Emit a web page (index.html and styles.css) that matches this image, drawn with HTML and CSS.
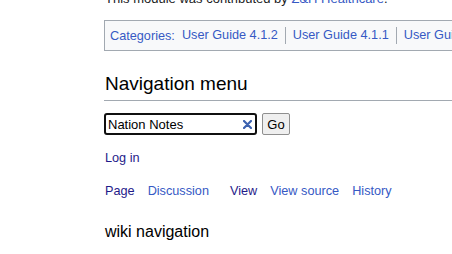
FILE: index.html
```html
<!DOCTYPE html>
<html lang="en">
<head>
    <meta charset="UTF-8">
    <title>Navigation menu</title>
    <link rel="stylesheet" href="styles.css">
</head>
<body>
    <div class="content">
        <p class="credit">This module was contributed by <a href="#" class="link">Z&amp;H Healthcare</a>.</p>

        <div class="catlinks">
            <span class="cat-label">Categories:</span>
            <ul class="cat-list">
                <li><a href="#" class="link">User Guide 4.1.2</a></li>
                <li><a href="#" class="link">User Guide 4.1.1</a></li>
                <li><a href="#" class="link">User Guide 4.1.0</a></li>
            </ul>
        </div>

        <h2 class="nav-title">Navigation menu</h2>

        <form class="search" onsubmit="return false">
            <div class="search-box">
                <span class="search-text">Nation Notes</span>
                <svg class="search-clear" width="9" height="9" viewBox="0 0 9 9">
                    <path d="M1 1 L8 8 M8 1 L1 8" stroke="#3d62b0" stroke-width="2.2" stroke-linecap="round"/>
                </svg>
            </div>
            <button class="go-btn" type="submit">Go</button>
        </form>

        <div class="personal">
            <a href="#" class="visited">Log in</a>
        </div>

        <div class="views">
            <div class="tab-group">
                <a href="#" class="visited">Page</a>
                <a href="#" class="link">Discussion</a>
            </div>
            <div class="tab-group">
                <a href="#" class="visited">View</a>
                <a href="#" class="link">View source</a>
                <a href="#" class="link">History</a>
            </div>
        </div>

        <h3 class="portal-title">wiki navigation</h3>
    </div>
</body>
</html>
```

FILE: styles.css
```css
* {
    margin: 0;
    padding: 0;
    box-sizing: border-box;
}

body {
    font-family: "Liberation Sans", Arial, sans-serif;
    background: #ffffff;
    color: #202122;
    overflow: hidden;
}

a {
    text-decoration: none;
}

.link {
    color: #3659c4;
}

.visited {
    color: #1f1b8a;
}

.content {
    padding-left: 104px;
    margin-top: -9px;
    width: 600px;
}

.credit {
    font-size: 13px;
    line-height: 16px;
    padding-left: 1px;
}

/* category box */
.catlinks {
    display: flex;
    align-items: center;
    margin-top: 13px;
    height: 31px;
    padding: 0 5px;
    border: 1px solid #a2a9b1;
    background: #f8f9fa;
    font-size: 12.7px;
    white-space: nowrap;
}

.cat-label {
    color: #3659c4;
    margin-right: 7px;
}

.cat-list {
    list-style: none;
    display: flex;
}

.cat-list li {
    padding: 0 7px 0 7px;
    border-left: 1px solid #a2a9b1;
    line-height: 17px;
}

.cat-list li:first-child {
    padding-left: 0;
    border-left: none;
}

/* navigation */
.nav-title {
    margin-top: 21px;
    font-size: 19px;
    font-weight: normal;
    color: #000;
    line-height: 24px;
    padding-left: 1px;
    padding-bottom: 4px;
    border-bottom: 1px solid #a2a9b1;
}

.search {
    display: flex;
    align-items: center;
    gap: 5px;
    margin-top: 12px;
}

.search-box {
    display: flex;
    align-items: center;
    justify-content: space-between;
    width: 153px;
    height: 22px;
    padding: 0 3px 0 2px;
    border: 2px solid #101010;
    border-radius: 3px;
    background: #fff;
}

.search-text {
    font-size: 13px;
    color: #000;
}

.search-clear {
    display: block;
}

.go-btn {
    font-family: "Liberation Sans", Arial, sans-serif;
    font-size: 13px;
    color: #000;
    height: 22px;
    width: 28px;
    border: 1px solid #8f8f8f;
    border-radius: 2px;
    background: #efefef;
}

.personal {
    margin-top: 15px;
    font-size: 12.7px;
    line-height: 16px;
    padding-left: 1px;
}

.views {
    display: flex;
    gap: 21px;
    margin-top: 17px;
    font-size: 12.7px;
    line-height: 16px;
    padding-left: 1px;
}

.tab-group {
    display: flex;
    gap: 13px;
}

.portal-title {
    margin-top: 23px;
    font-size: 16px;
    font-weight: normal;
    color: #000;
    line-height: 20px;
    padding-left: 1px;
}
```
